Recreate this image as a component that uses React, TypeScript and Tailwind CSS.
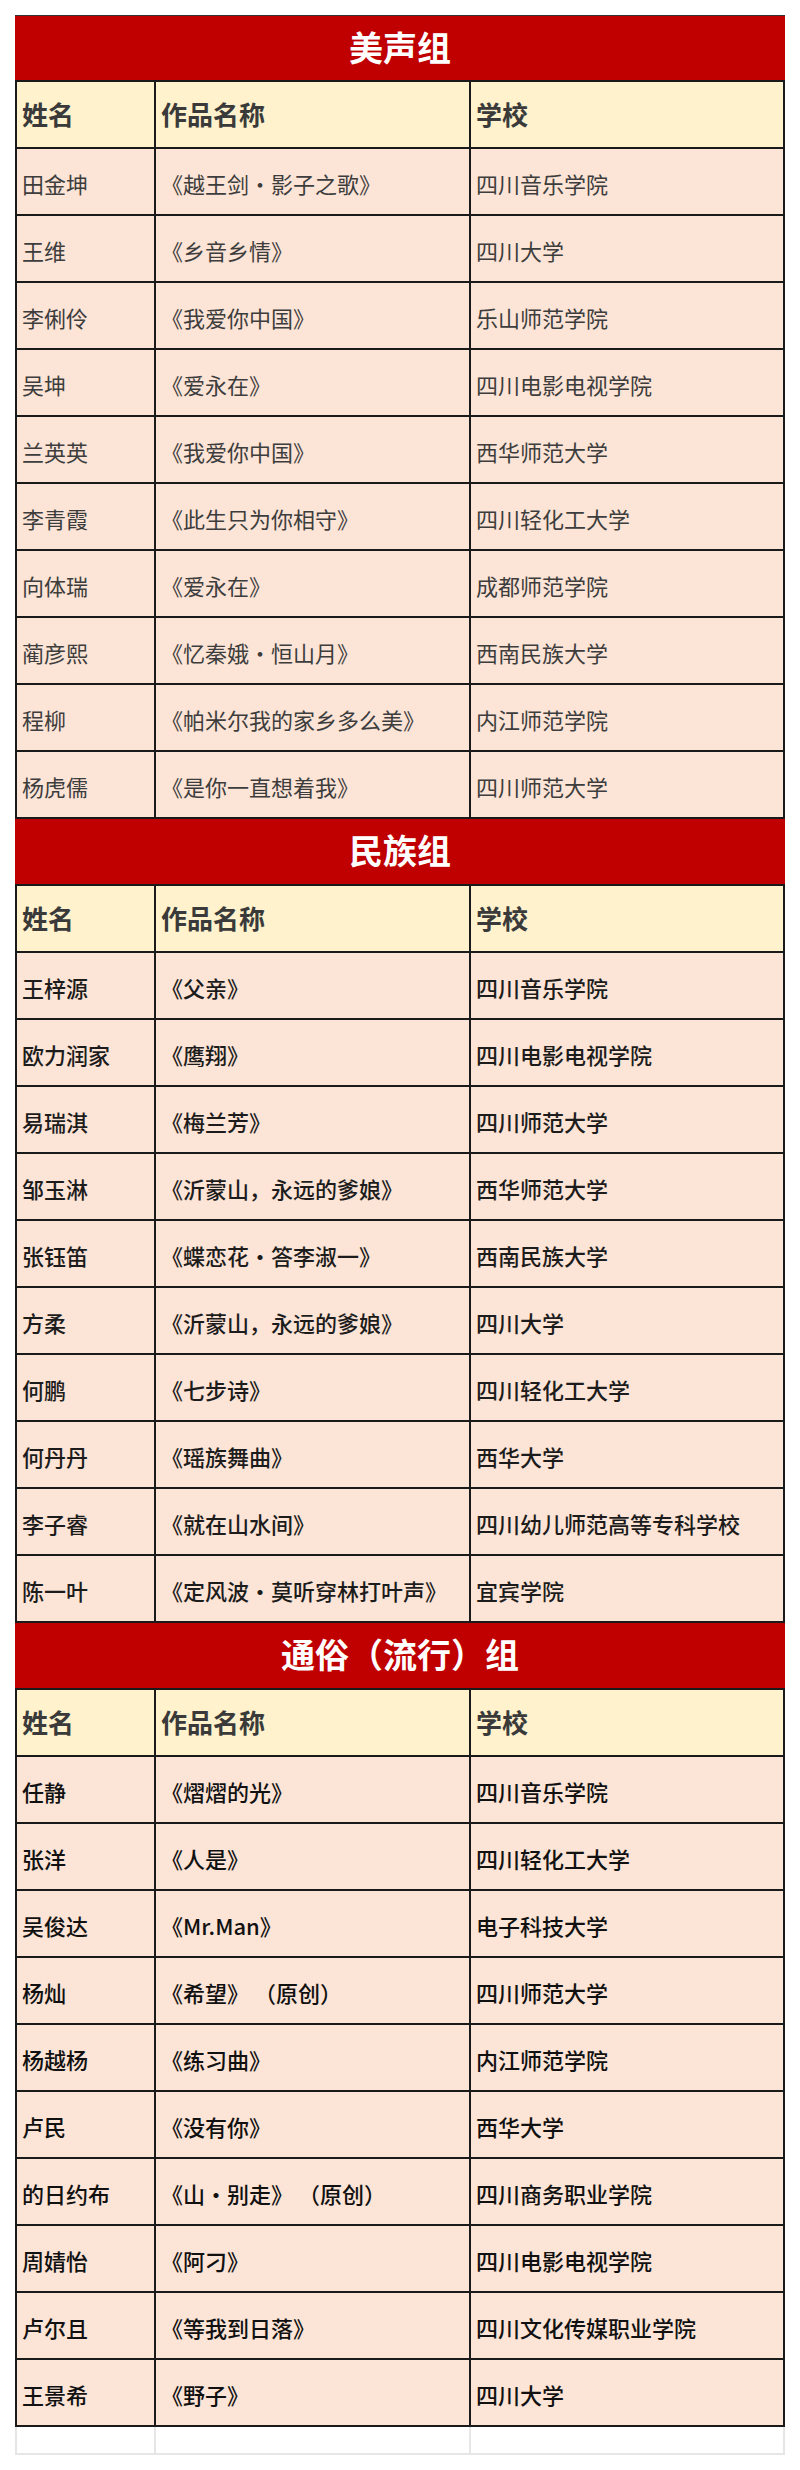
import React from 'react'

type Entry = [string, string, string]

const sections: { title: string; tone: string; rows: Entry[] }[] = [
  {
    title: '美声组',
    tone: 'text-[#3d3d3d] font-normal',
    rows: [
      ['田金坤', '《越王剑·影子之歌》', '四川音乐学院'],
      ['王维', '《乡音乡情》', '四川大学'],
      ['李俐伶', '《我爱你中国》', '乐山师范学院'],
      ['吴坤', '《爱永在》', '四川电影电视学院'],
      ['兰英英', '《我爱你中国》', '西华师范大学'],
      ['李青霞', '《此生只为你相守》', '四川轻化工大学'],
      ['向体瑞', '《爱永在》', '成都师范学院'],
      ['蔺彦熙', '《忆秦娥·恒山月》', '西南民族大学'],
      ['程柳', '《帕米尔我的家乡多么美》', '内江师范学院'],
      ['杨虎儒', '《是你一直想着我》', '四川师范大学'],
    ],
  },
  {
    title: '民族组',
    tone: 'text-[#1c1c1c] font-medium',
    rows: [
      ['王梓源', '《父亲》', '四川音乐学院'],
      ['欧力润家', '《鹰翔》', '四川电影电视学院'],
      ['易瑞淇', '《梅兰芳》', '四川师范大学'],
      ['邹玉淋', '《沂蒙山，永远的爹娘》', '西华师范大学'],
      ['张钰笛', '《蝶恋花·答李淑一》', '西南民族大学'],
      ['方柔', '《沂蒙山，永远的爹娘》', '四川大学'],
      ['何鹏', '《七步诗》', '四川轻化工大学'],
      ['何丹丹', '《瑶族舞曲》', '西华大学'],
      ['李子睿', '《就在山水间》', '四川幼儿师范高等专科学校'],
      ['陈一叶', '《定风波·莫听穿林打叶声》', '宜宾学院'],
    ],
  },
  {
    title: '通俗（流行）组',
    tone: 'text-[#111111] font-medium',
    rows: [
      ['任静', '《熠熠的光》', '四川音乐学院'],
      ['张洋', '《人是》', '四川轻化工大学'],
      ['吴俊达', '《Mr.Man》', '电子科技大学'],
      ['杨灿', '《希望》 （原创）', '四川师范大学'],
      ['杨越杨', '《练习曲》', '内江师范学院'],
      ['卢民', '《没有你》', '西华大学'],
      ['的日约布', '《山·别走》 （原创）', '四川商务职业学院'],
      ['周婧怡', '《阿刁》', '四川电影电视学院'],
      ['卢尔且', '《等我到日落》', '四川文化传媒职业学院'],
      ['王景希', '《野子》', '四川大学'],
    ],
  },
]

const font = { fontFamily: '"Noto Sans CJK SC", "Noto Sans", sans-serif' }

function Row({ cells, className }: { cells: string[]; className: string }) {
  return (
    <div className="grid h-[67px] grid-cols-[139px_315px_316px] border-b-2 border-[#1a1a1a]">
      {cells.map((c, i) => (
        <div
          key={i}
          className={`flex items-center whitespace-pre border-l-2 border-[#1a1a1a] pl-[5px] ${i === 2 ? 'border-r-2' : ''} ${className}`}
        >
          {c}
        </div>
      ))}
    </div>
  )
}

export default function App() {
  return (
    <div className="min-h-[2470px] bg-white pt-[15px] pl-[15px]" style={font}>
      <div className="w-[770px]">
        {sections.map((s, si) => (
          <div key={s.title}>
            <div
              className={`flex h-[67px] items-center justify-center border-b-2 border-[#1a1a1a] bg-[#c00000] pb-[4px] text-[34px] font-bold text-white ${si === 0 ? 'border-t border-t-[#333]' : ''}`}
            >
              {s.title}
            </div>
            <Row
              cells={['姓名', '作品名称', '学校']}
              className="bg-[#fff2cc] pb-[2px] text-[26px] font-bold text-[#3a3a3a]"
            />
            {s.rows.map((r, ri) => (
              <Row key={ri} cells={r} className={`bg-[#fce4d6] pt-[4px] text-[22px] ${s.tone}`} />
            ))}
          </div>
        ))}
        <div className="grid h-[28px] grid-cols-[139px_315px_316px] border-b-2 border-[#e6e6e6]">
          <div className="border-l-2 border-[#e6e6e6]" />
          <div className="border-l-2 border-[#e6e6e6]" />
          <div className="border-x-2 border-[#e6e6e6]" />
        </div>
      </div>
    </div>
  )
}
